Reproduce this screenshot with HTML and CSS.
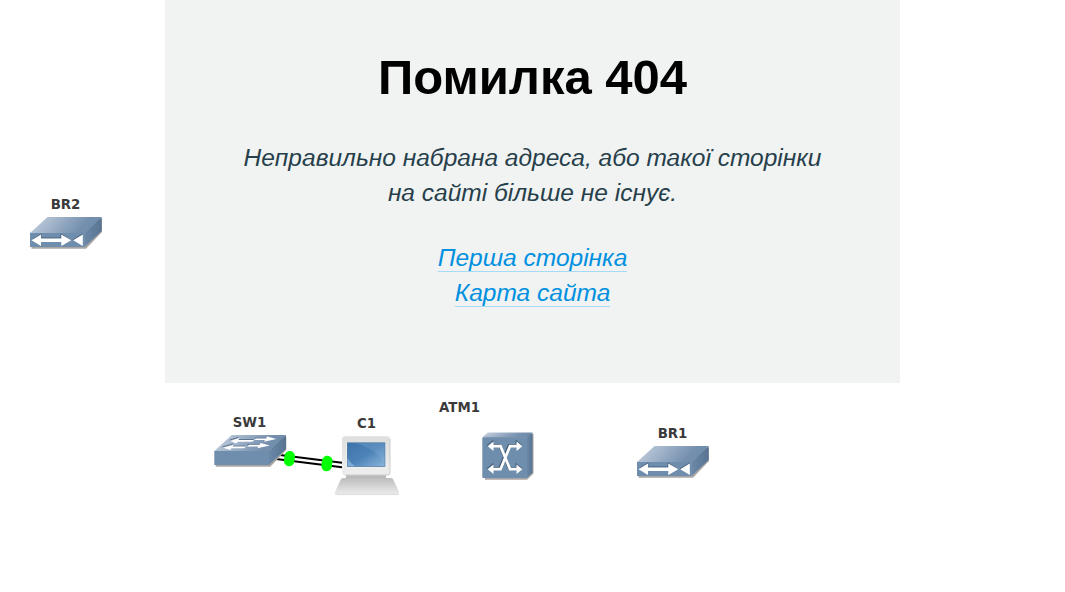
FILE: index.html
```html
<!DOCTYPE html>
<html lang="uk">
<head>
<meta charset="utf-8">
<title>Помилка 404</title>
<link rel="stylesheet" href="styles.css">
</head>
<body>
<svg class="network" width="1065" height="592" viewBox="0 0 1065 592">
  <defs>
    <linearGradient id="top" x1="0" y1="0.3" x2="1" y2="0.5">
      <stop offset="0" stop-color="#c3cfdd"/><stop offset="0.75" stop-color="#7590af"/><stop offset="1" stop-color="#6d8aaa"/>
    </linearGradient>
    <linearGradient id="side" x1="0" y1="0" x2="1" y2="0">
      <stop offset="0" stop-color="#6b88a8"/><stop offset="1" stop-color="#587492"/>
    </linearGradient>
    <linearGradient id="screen" x1="0" y1="0" x2="1" y2="1">
      <stop offset="0" stop-color="#3d74ab"/><stop offset="0.5" stop-color="#4c82b7"/><stop offset="1" stop-color="#8db6dc"/>
    </linearGradient>
    <linearGradient id="case" x1="0" y1="0" x2="0" y2="1">
      <stop offset="0" stop-color="#dedede"/><stop offset="1" stop-color="#eeeeee"/>
    </linearGradient>
    <linearGradient id="keys" x1="0" y1="0" x2="0" y2="1">
      <stop offset="0" stop-color="#bdbdbd"/><stop offset="1" stop-color="#efefef"/>
    </linearGradient>
    <g id="box">
      <path d="M1.5 17.2 18.5 2H72v13L56 31.7H1.5z" fill="#a9a5a3"/>
      <path d="M0 16 17.5 0H71.7L54.5 16z" fill="url(#top)"/>
      <path d="M54.5 16 71.7 0v14L54.5 30z" fill="url(#side)"/>
      <path d="M0 16h54.7v14H0z" fill="#6f8dac"/>
    </g>
    <g id="bridge">
      <use href="#box"/>
      <path d="M3 22.2 10.8 17v4H31v-4l9.5 6M52.5 17 43 23" fill="none" stroke="#40536a" stroke-width="0.8"/>
      <path d="M1.5 23.3 11 17.6v3.9h20.3v-3.9L41.3 23.3 31.3 29v-4H11v4zM43.2 23.3l9.6-5.7v11.4z" fill="#fff"/>
    </g>
  </defs>

  <g class="links">
    <path d="M268 453.5 348 463.5M268 458 348 468"/>
    <path class="port" d="M289.8 456.3 289.1 461M327.3 461 326.6 466"/>
  </g>

  <use href="#bridge" x="30" y="217"/>
  <use href="#bridge" x="637" y="446"/>

  <g transform="translate(214.3 435)">
    <use href="#box"/>
    <g fill="none" stroke="#475f7b" stroke-width="0.8">
      <path d="M15.5 5 24 2.3M23 4.6H39M8 12 18.5 9M18 11.2H31M40.5 3.2H51M33 9.5H45"/>
    </g>
    <g fill="#fff">
      <path d="M16 5.9 25.3 3.1 24 4.9h16l-1.9 1.8H23.2l-.8 1.7z"/>
      <path d="M8.5 12.7 19.5 9.7 18.2 11.5h13.6L30 13.3H17l-.8 1.8z"/>
      <path d="M41.5 3.4H52L52.7 1.6 62 4 49.8 6.7l.9-1.7H39.8z"/>
      <path d="M34.7 9.7H45.5l.7-1.8L55.5 10.5 43 13.3l1-1.8H32.9z"/>
    </g>
  </g>

  <g>
    <path d="M346 474h40v4h-40z" fill="#b9b9b9"/>
    <rect x="342" y="436.3" width="48" height="39" rx="3" fill="url(#case)"/>
    <path d="M390 439v34q0 2-3 2h-42" fill="none" stroke="#c3c3c3" stroke-width="0.8"/>
    <rect x="346.5" y="442" width="39.5" height="25.3" fill="#f7f7f7"/>
    <rect x="347.3" y="442.8" width="37.7" height="23.7" fill="url(#screen)" stroke="#37648f" stroke-width="0.6"/>
    <path d="M355 443h30v21q-7-14-30-21z" fill="#9cbfe0" opacity="0.2"/>
    <path d="M347.6 458q3 6 8 8.2h-8z" fill="#9cc3e9" opacity="0.65"/>
    <path d="M343 478h48q2 0 3 3l5 11q1 3.3-3 3.3h-58q-4 0-3-3.3l5-11q1-3 3-3z" fill="url(#keys)"/>
    <path d="M335.5 494.2h63" stroke="#dcdcdc" stroke-width="1"/>
  </g>

  <g>
    <path d="M484 438.5 491 434h42.5v39.5l-6.5 6.2h-42z" fill="#a9a5a3"/>
    <path d="M482.3 437.3 488 432.5h44.5l-5 4.8z" fill="url(#top)"/>
    <path d="M526.8 437.3 532.5 432.5v40l-5.7 5.7z" fill="url(#side)"/>
    <rect x="482.3" y="437.3" width="44.7" height="40.7" rx="1" fill="#6f8dac"/>
    <path d="M491 445.3h8.5L509 468.2h8M491 468.2h8.5L509 445.3h8" fill="none" stroke="#405871" stroke-width="2.4"/>
    <path d="M487 445.5 493 440.7v3M487 468.5 493 463.7v3M516 443.5v-3L522 445.5M516 466.5v-3L522 468.5" fill="none" stroke="#405871"/>
    <path d="M492 446.2h8.5L510 469.2h8M492 469.2h8.5L510 446.2h8" fill="none" stroke="#fff" stroke-width="2.7"/>
    <path d="M487.8 446.2 493.5 441.4v9.6zM487.8 469.2 493.5 464.4v9.6zM522.3 446.2 516.6 441.4v9.6zM522.3 469.2 516.6 464.4v9.6z" fill="#fff"/>
  </g>

  <g class="labels">
    <text x="65.5" y="209">BR2</text>
    <text x="249.5" y="427">SW1</text>
    <text x="366.5" y="428">C1</text>
    <text x="459.5" y="412">ATM1</text>
    <text x="672.5" y="438">BR1</text>
  </g>
</svg>
<main class="message">
  <h1 class="title">Помилка 404</h1>
  <p class="text">Неправильно набрана адреса, або такої сторінки<br>на сайті більше не існує.</p>
  <p class="text"><a class="link" href="#">Перша сторінка</a><br><a class="link" href="#">Карта сайта</a></p>
</main>
</body>
</html>
```
FILE: styles.css
```css
body {
  margin: 0;
  background: #fff;
  overflow: hidden;
  font-family: "Liberation Sans", Arial, sans-serif;
}

.network {
  position: absolute;
  top: 0;
  left: 0;
  z-index: -1;
}

.links path {
  fill: none;
  stroke: #000;
  stroke-width: 2;
}

.links .port {
  stroke: #0f0;
  stroke-width: 10.5;
  stroke-linecap: round;
}

.labels text {
  font: bold 13.33px "DejaVu Sans", sans-serif;
  fill: #3a3a3a;
  text-anchor: middle;
}

.message {
  box-sizing: border-box;
  width: 735px;
  height: 383px;
  margin: 0 auto;
  padding-top: 42px;
  background: #f0f3f2;
  text-align: center;
}

.title {
  margin: 0 0 28px;
  font-size: 49px;
  line-height: 70px;
  color: #000;
}

.text {
  margin: 0 0 30px;
  font-size: 24.53px;
  font-style: italic;
  line-height: 35px;
  color: #273f4b;
}

.link {
  color: #0090e0;
  text-decoration: none;
  border-bottom: 1px solid #a6dbf7;
}
```
